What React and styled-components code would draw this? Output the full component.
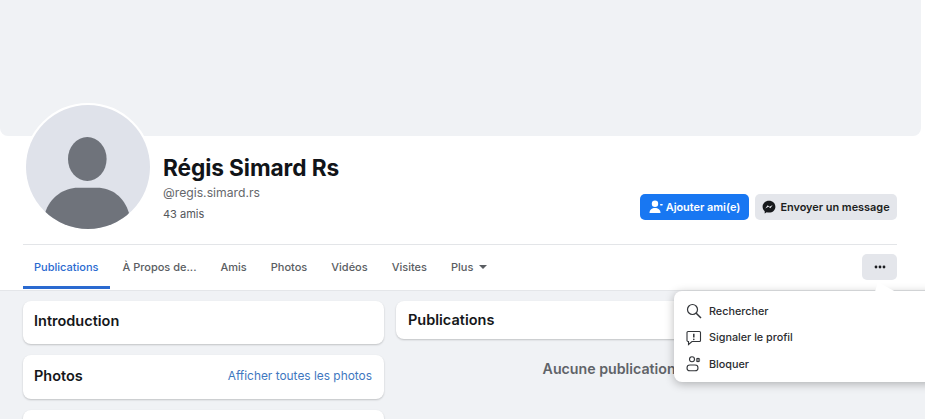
import React from "react";
import styled, { createGlobalStyle } from "styled-components";

const Global = createGlobalStyle`
  html, body { margin: 0; padding: 0; background: #fff; overflow: hidden; }
  body { font-family: Inter, "Liberation Sans", Arial, sans-serif; -webkit-font-smoothing: antialiased; }
`;

const Page = styled.div`
  width: 925px;
  height: 419px;
  overflow: hidden;
  position: relative;
  background: #f0f2f5;
`;
const Header = styled.header`
  background: #fff;
  height: 291px;
  box-sizing: border-box;
  border-bottom: 1px solid #e4e6e9;
  display: flex;
  flex-direction: column;
`;
const Cover = styled.div`
  width: 921px;
  height: 136px;
  flex: none;
  background: #f0f2f5;
  border-radius: 0 0 8px 8px;
`;
const Identity = styled.div`
  height: 108px;
  margin: 0 28px 0 23px;
  display: flex;
  flex: none;
  border-bottom: 1px solid #e3e5e8;
`;
const Avatar = styled.div`
  width: 124px;
  height: 124px;
  flex: none;
  margin: -33px 0 0 1px;
  border: 2px solid #fff;
  border-radius: 50%;
  overflow: hidden;
  background: #fff;
  svg { display: block; }
`;
const Names = styled.div`
  margin-left: 11px;
  padding-top: 18px;
  flex: 1;
`;
const Name = styled.h1`
  margin: 0;
  font-size: 22.7px;
  line-height: 27px;
  font-weight: 700;
  color: #111418;
  letter-spacing: -0.1px;
`;
const Handle = styled.div`
  margin-top: 3px;
  font-size: 12.2px;
  line-height: 18px;
  color: #65676b;
`;
const Friends = styled.div`
  margin-top: 3px;
  font-size: 11px;
  line-height: 18px;
  color: #53565b;
`;
const Actions = styled.div`
  display: flex;
  gap: 6px;
  padding-top: 58px;
`;
const Button = styled.button`
  height: 26px;
  border: 0;
  border-radius: 5px;
  display: flex;
  align-items: center;
  justify-content: center;
  gap: ${p => (p.$primary ? 2 : 4)}px;
  padding: 0;
  width: ${p => p.$w}px;
  background: ${p => (p.$primary ? "#1877f2" : "#e4e6eb")};
  color: ${p => (p.$primary ? "#fff" : "#1c1e21")};
  font: 600 10.9px Inter, "Liberation Sans", sans-serif;
`;
const TabBar = styled.nav`
  display: flex;
  align-items: stretch;
  height: 45px;
  margin: 0 28px 0 23px;
`;
const Tab = styled.div`
  display: flex;
  align-items: center;
  gap: 6px;
  box-sizing: border-box;
  margin-bottom: 1px;
  padding: 2px 12px 0 ${p => (p.$active ? 11 : 12)}px;
  font-size: 11px;
  font-weight: 500;
  color: ${p => (p.$active ? "#2a6ad0" : "#5a5d62")};
  border-bottom: 3px solid ${p => (p.$active ? "#2a6ad0" : "transparent")};
  white-space: nowrap;
`;
const Caret = styled.span`
  width: 0;
  height: 0;
  border-left: 4px solid transparent;
  border-right: 4px solid transparent;
  border-top: 4.5px solid #5a5d62;
`;
const MoreButton = styled.button`
  margin: 9px 0 0 auto;
  width: 35px;
  height: 26px;
  border: 0;
  border-radius: 5px;
  background: #e4e6eb;
  display: flex;
  align-items: center;
  justify-content: center;
  padding: 0;
`;
const Columns = styled.main`
  display: flex;
  gap: 12px;
  padding: 10px 28px 0 23px;
`;
const Left = styled.div`
  width: 361px;
  flex: none;
  display: flex;
  flex-direction: column;
  gap: 11px;
`;
const Right = styled.div`
  flex: 1;
  display: flex;
  flex-direction: column;
`;
const Card = styled.section`
  height: ${p => p.$h}px;
  flex: none;
  box-sizing: border-box;
  background: #fff;
  border-radius: 8px;
  box-shadow: 0 1px 2px rgba(0, 0, 0, 0.2);
  padding: 0 12px ${p => p.$lift || 0}px ${p => p.$inset || 11}px;
  display: flex;
  align-items: center;
  justify-content: space-between;
`;
const CardTitle = styled.h2`
  margin: 0;
  font-size: 14.5px;
  font-weight: 600;
  color: #15171a;
`;
const CardLink = styled.a`
  font-size: 11.9px;
  color: #3f78bf;
`;
const Empty = styled.div`
  margin-top: 21px;
  text-align: center;
  font-size: 14.2px;
  line-height: 18px;
  font-weight: 600;
  color: #5f6368;
`;
const Menu = styled.div`
  position: absolute;
  left: 674px;
  top: 291px;
  width: 270px;
  height: 91px;
  background: #fff;
  border-radius: 8px;
  box-shadow: 0 2px 10px rgba(0, 0, 0, 0.28);
  box-sizing: border-box;
  padding-top: 7px;
  &::before {
    content: "";
    position: absolute;
    left: 200px;
    top: -9px;
    width: 22px;
    height: 10px;
    background: #fff;
    clip-path: polygon(18% 0, 4% 100%, 100% 100%);
  }
`;
const MenuItem = styled.div`
  position: relative;
  height: 26.6px;
  display: flex;
  align-items: center;
  padding-left: 12px;
  gap: 7px;
  font-size: 10.8px;
  font-weight: 500;
  color: #2b2d30;
`;

const Silhouette = () => (
  <svg width="124" height="124" viewBox="0 0 124 124">
    <rect width="124" height="124" fill="#dfe2ea" />
    <ellipse cx="61.300" cy="54" rx="19.300" ry="22" fill="#6f737b" />
    <path d="M19 108 C24 92 38 82.700 52 82.700 H71 C86 82.700 98 92 103 108 C92 130 32 130 19 108 Z" fill="#6f737b" />
  </svg>
);
const AddIcon = () => (
  <svg width="15" height="14" viewBox="0 0 15 14">
    <circle cx="6" cy="3.800" r="3.200" fill="#fff" />
    <path d="M0.500 13 C0.500 9.500 3 8 6 8 C9 8 11.500 9.500 11.500 13 Z" fill="#fff" />
    <rect x="11" y="4" width="2.800" height="1.400" rx="0.700" fill="#fff" />
  </svg>
);
const MessengerIcon = () => (
  <svg width="14" height="14" viewBox="0 0 14 14">
    <path d="M7 0.700 C3.300 0.700 0.600 3.300 0.600 6.800 C0.600 8.700 1.400 10.200 2.700 11.300 V13.400 L4.700 12.300 C5.400 12.500 6.200 12.600 7 12.600 C10.700 12.600 13.400 10 13.400 6.700 C13.400 3.300 10.700 0.700 7 0.700 Z" fill="#17191c" />
    <path d="M3.300 8.500 L5.600 5.200 L7.500 6.700 L10.700 4.900 L8.400 8.200 L6.500 6.700 Z" fill="#e4e6eb" />
  </svg>
);
const Dots = () => (
  <svg width="12" height="4" viewBox="0 0 12 4">
    <circle cx="2" cy="2" r="1.400" fill="#1c1e21" />
    <circle cx="6" cy="2" r="1.400" fill="#1c1e21" />
    <circle cx="10" cy="2" r="1.400" fill="#1c1e21" />
  </svg>
);
const SearchIcon = () => (
  <svg width="16" height="16" viewBox="0 0 16 16" fill="none" stroke="#33363a" strokeWidth="1.200">
    <circle cx="6.500" cy="6.500" r="5" />
    <path d="M10.200 10.200 L15 15" strokeWidth="1.500" />
  </svg>
);
const ReportIcon = () => (
  <svg width="16" height="16" viewBox="0 0 16 16" fill="none" stroke="#33363a" strokeWidth="1.100">
    <path d="M2 1.500 H13.500 A1 1 0 0 1 14.500 2.500 V10.500 A1 1 0 0 1 13.500 11.500 H6 L2.500 14.500 L2.500 11.500 H2 A1 1 0 0 1 1 10.500 V2.500 A1 1 0 0 1 2 1.500 Z" />
    <path d="M7.800 3.800 V7.500" strokeWidth="1.500" />
    <circle cx="7.800" cy="9.400" r="0.800" fill="#33363a" stroke="none" />
  </svg>
);
const BlockIcon = () => (
  <svg width="16" height="16" viewBox="0 0 16 16" fill="none" stroke="#33363a" strokeWidth="1.100">
    <circle cx="6" cy="3.300" r="2.500" />
    <rect x="1" y="9" width="11" height="5.800" rx="2.900" />
    <circle cx="12" cy="4" r="2.200" fill="#33363a" stroke="none" />
    <path d="M10.300 4 H13.700" stroke="#fff" strokeWidth="0.800" />
  </svg>
);

export default function App() {
  return (
    <Page>
      <Global />
      <Header>
        <Cover />
        <Identity>
          <Avatar><Silhouette /></Avatar>
          <Names>
            <Name>Régis Simard Rs</Name>
            <Handle>@regis.simard.rs</Handle>
            <Friends>43 amis</Friends>
          </Names>
          <Actions>
            <Button $primary $w={109}><AddIcon />Ajouter ami(e)</Button>
            <Button $w={142}><MessengerIcon />Envoyer un message</Button>
          </Actions>
        </Identity>
        <TabBar>
          <Tab $active>Publications</Tab>
          <Tab>À Propos de...</Tab>
          <Tab>Amis</Tab>
          <Tab>Photos</Tab>
          <Tab>Vidéos</Tab>
          <Tab>Visites</Tab>
          <Tab>Plus<Caret /></Tab>
          <MoreButton aria-label="Plus"><Dots /></MoreButton>
        </TabBar>
      </Header>
      <Columns>
        <Left>
          <Card $h={43} $lift={4}><CardTitle>Introduction</CardTitle></Card>
          <Card $h={44} $lift={3}>
            <CardTitle>Photos</CardTitle>
            <CardLink>Afficher toutes les photos</CardLink>
          </Card>
          <Card $h={43} />
        </Left>
        <Right>
          <Card $h={38} $lift={1} $inset={12}><CardTitle>Publications</CardTitle></Card>
          <Empty>Aucune publication disponible</Empty>
        </Right>
      </Columns>
      <Menu>
        <MenuItem><SearchIcon />Rechercher</MenuItem>
        <MenuItem><ReportIcon />Signaler le profil</MenuItem>
        <MenuItem><BlockIcon />Bloquer</MenuItem>
      </Menu>
    </Page>
  );
}
